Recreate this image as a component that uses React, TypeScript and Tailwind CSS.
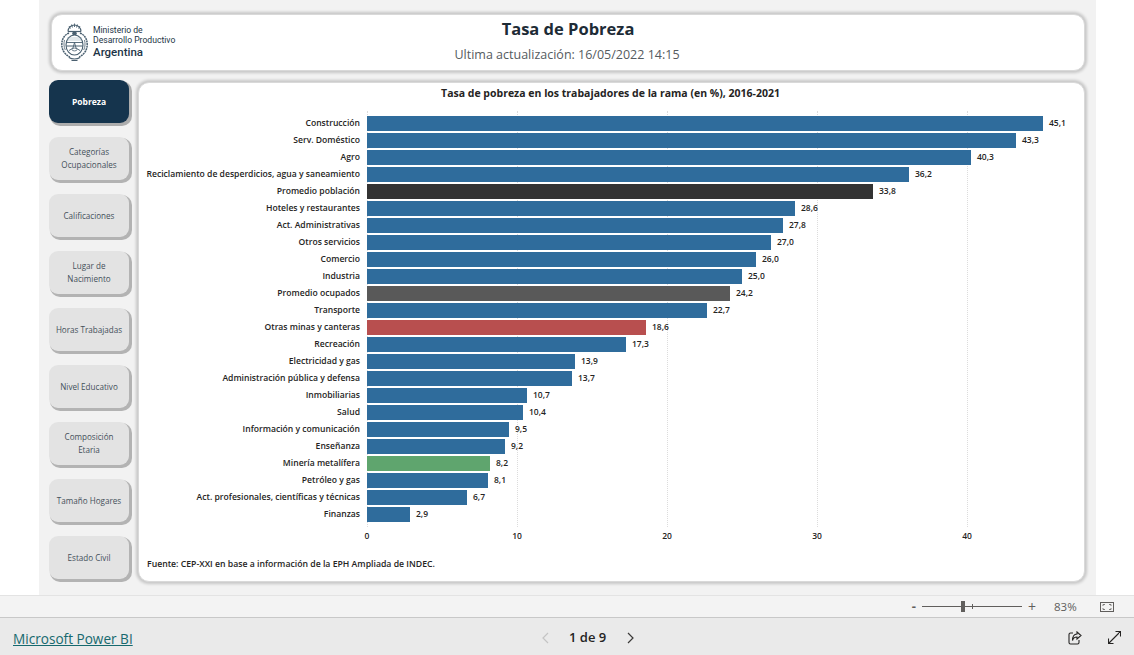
import React from 'react'

const rows = [
  { label: 'Construcción', value: 45.1, color: 'bg-[#2f6c9c]' },
  { label: 'Serv. Doméstico', value: 43.3, color: 'bg-[#2f6c9c]' },
  { label: 'Agro', value: 40.3, color: 'bg-[#2f6c9c]' },
  { label: 'Reciclamiento de desperdicios, agua y saneamiento', value: 36.2, color: 'bg-[#2f6c9c]' },
  { label: 'Promedio población', value: 33.8, color: 'bg-[#333333]' },
  { label: 'Hoteles y restaurantes', value: 28.6, color: 'bg-[#2f6c9c]' },
  { label: 'Act. Administrativas', value: 27.8, color: 'bg-[#2f6c9c]' },
  { label: 'Otros servicios', value: 27.0, color: 'bg-[#2f6c9c]' },
  { label: 'Comercio', value: 26.0, color: 'bg-[#2f6c9c]' },
  { label: 'Industria', value: 25.0, color: 'bg-[#2f6c9c]' },
  { label: 'Promedio ocupados', value: 24.2, color: 'bg-[#595959]' },
  { label: 'Transporte', value: 22.7, color: 'bg-[#2f6c9c]' },
  { label: 'Otras minas y canteras', value: 18.6, color: 'bg-[#b84f4f]' },
  { label: 'Recreación', value: 17.3, color: 'bg-[#2f6c9c]' },
  { label: 'Electricidad y gas', value: 13.9, color: 'bg-[#2f6c9c]' },
  { label: 'Administración pública y defensa', value: 13.7, color: 'bg-[#2f6c9c]' },
  { label: 'Inmobiliarias', value: 10.7, color: 'bg-[#2f6c9c]' },
  { label: 'Salud', value: 10.4, color: 'bg-[#2f6c9c]' },
  { label: 'Información y comunicación', value: 9.5, color: 'bg-[#2f6c9c]' },
  { label: 'Enseñanza', value: 9.2, color: 'bg-[#2f6c9c]' },
  { label: 'Minería metalífera', value: 8.2, color: 'bg-[#5fa56e]' },
  { label: 'Petróleo y gas', value: 8.1, color: 'bg-[#2f6c9c]' },
  { label: 'Act. profesionales, científicas y técnicas', value: 6.7, color: 'bg-[#2f6c9c]' },
  { label: 'Finanzas', value: 2.9, color: 'bg-[#2f6c9c]' },
]

const navItems = [
  ['Pobreza'],
  ['Categorías', 'Ocupacionales'],
  ['Calificaciones'],
  ['Lugar de', 'Nacimiento'],
  ['Horas Trabajadas'],
  ['Nivel Educativo'],
  ['Composición', 'Etaria'],
  ['Tamaño Hogares'],
  ['Estado Civil'],
]

const Shield = () => (
  <svg width="27" height="41" viewBox="0 0 27 41" fill="none" stroke="#4a6070" strokeWidth="1">
    {/* sol */}
    <path d="M7 10.500a6.500 6.500 0 0 1 13 0" strokeWidth="1.2" />
    <path d="M8 5l1.500 2.500M13.500 2.500V6M19 5l-1.500 2.500M10.500 3.500l1 3M16.500 3.500l-1 3" strokeWidth="0.9" />
    <path d="M7 10.500h13" strokeWidth="1.2" />
    <circle cx="13.500" cy="12.500" r="2.300" fill="#4a6070" stroke="none" />
    {/* laureles */}
    <path d="M8 12C3 14 .8 18.500.8 23.500c0 5.500 3 10 8 12.500M19 12c5 2 7.200 6.500 7.200 11.500 0 5.500-3 10-8 12.500" strokeWidth="1.500" strokeDasharray="2 0.600" />
    <path d="M3.500 19c-.8 3-.8 7 .8 10M23.500 19c.8 3 .8 7-.8 10" strokeWidth="0.8" />
    {/* escudo */}
    <ellipse cx="13.500" cy="24" rx="8.500" ry="10" strokeWidth="1.100" fill="#fff" />
    <path d="M5.300 21.500h16.400" strokeWidth="0.900" />
    <path d="M5.800 19h15.400M6 17h15" strokeWidth="0.500" stroke="#8aa0ae" />
    <path d="M5.200 25h16.600" strokeWidth="1" />
    <path d="M8 29.500l4-2.500 1.500-5.500M19 29.500l-4-2.500-1.500-5.500" strokeWidth="0.900" />
    <ellipse cx="13.500" cy="28.500" rx="2.500" ry="1.400" strokeWidth="0.800" />
    {/* cinta */}
    <path d="M8 36.500c3 2 8 2 11 0M10.500 39.500h6" strokeWidth="1.200" />
  </svg>
)

const Header = () => (
  <div className="h-[57px] ml-[12px] w-[1034px] bg-white rounded-[11px] border border-[#d9d9d9] shadow-[0_0_3px_2px_rgba(0,0,0,0.18)] flex relative">
    <div className="absolute left-[9px] top-[6px] flex items-center gap-[5px]">
      <Shield />
      <div className="flex flex-col text-[#1c3446] font-['Roboto',sans-serif]">
        <span className="text-[8.600px] leading-[10px]">Ministerio de</span>
        <span className="text-[8.600px] leading-[10px]">Desarrollo Productivo</span>
        <span className="text-[11.500px] leading-[14px] font-medium">Argentina</span>
      </div>
    </div>
    <div className="flex-1 flex flex-col items-center">
      <span className="text-[16.500px] leading-[24px] mt-[2px] font-bold text-[#1d2b36]">Tasa de Pobreza</span>
      <span className="text-[12.500px] leading-[18px] mt-[5px] -ml-[2px] text-[#555b60]">Ultima actualización: 16/05/2022 14:15</span>
    </div>
  </div>
)

const Sidebar = () => (
  <div className="w-[99px] pl-[10px] flex flex-col gap-[14px] shrink-0">
    {navItems.map((item, i) => (
      <div
        key={item[0]}
        className={
          i === 0
            ? 'w-[80px] h-[43px] rounded-[9px] bg-[#15344d] shadow-[2px_2px_0_1px_#adadad] flex flex-col items-center justify-center text-white font-bold text-[8.500px] leading-[13px]'
            : item.length > 1
              ? 'w-[80px] h-[43px] pb-[2px] rounded-[9px] bg-[#e3e3e3] shadow-[2px_2px_0_1px_#b3b3b3] flex flex-col items-center justify-center text-[#44505a] text-[8.100px] leading-[13px]'
              : 'w-[80px] h-[43px] rounded-[9px] bg-[#e3e3e3] shadow-[2px_2px_0_1px_#b3b3b3] flex flex-col items-center justify-center text-[#44505a] text-[8.100px] leading-[13px]'
        }
      >
        {item.map((line) => (
          <span key={line}>{line}</span>
        ))}
      </div>
    ))}
  </div>
)

const Chart = () => (
  <div className="w-[947px] h-[500px] mt-[2px] bg-white rounded-[11px] border border-[#d9d9d9] shadow-[0_0_3px_2px_rgba(0,0,0,0.18)] flex flex-col relative">
    <div className="h-[24px] -ml-[2px] text-center text-[10.500px] leading-[21px] font-bold text-[#252423]">
      Tasa de pobreza en los trabajadores de la rama (en %), 2016-2021
    </div>
    <div className="relative mt-[8px] flex flex-col">
      {/* lineas de la grilla */}
      {[0, 150, 300, 450, 600].map((left) => (
        <div
          key={left}
          className="absolute -top-[4px] h-[416px] border-l border-dotted border-[#dcdcdc]"
          style={{ left: 228 + left }}
        />
      ))}
      {rows.map((row) => (
        <div key={row.label} className="h-[17px] flex items-center relative">
          <div className="w-[221px] shrink-0 text-right text-[8.600px] font-semibold text-[#252423] whitespace-nowrap">
            {row.label}
          </div>
          <div className="ml-[7px] flex items-center">
            <div className={`h-[15px] ${row.color}`} style={{ width: Math.round(row.value * 14.98) }} />
            <span className="ml-[6px] text-[8.500px] font-semibold text-[#252423]">
              {row.value.toFixed(1).replace('.', ',')}
            </span>
          </div>
        </div>
      ))}
    </div>
    <div className="h-[16px] mt-[5px] ml-[228px] flex">
      {[0, 10, 20, 30, 40].map((tick) => (
        <span key={tick} className="w-[150px] shrink-0 text-[8.500px] font-semibold leading-[16px] text-[#252423]">
          <span className="inline-block -translate-x-1/2">{tick}</span>
        </span>
      ))}
    </div>
    <div className="mt-[14px] ml-[8px] text-[8.700px] font-semibold text-[#252423]">
      Fuente: CEP-XXI en base a información de la EPH Ampliada de INDEC.
    </div>
  </div>
)

const StatusBar = () => (
  <div className="h-[22px] bg-[#f3f3f3] border-t border-[#e3e3e3] flex items-center justify-end text-[#605e5c] shrink-0">
    <span className="text-[13px] leading-none font-bold mr-[6px]">-</span>
    <div className="relative w-[100px] h-[1px] bg-[#605e5c]">
      <div className="absolute left-[39px] top-[-5px] w-[4px] h-[11px] bg-[#605e5c]" />
      <div className="absolute left-[50px] top-[-2px] w-[1px] h-[5px] bg-[#605e5c]" />
    </div>
    <span className="text-[14px] leading-none ml-[6px]">+</span>
    <span className="text-[11.500px] ml-[18px] w-[25px]">83%</span>
    <svg className="ml-[21px] mr-[20px]" width="14" height="10" viewBox="0 0 14 10" fill="none" stroke="#605e5c">
      <rect x="0.5" y="0.5" width="13" height="9" />
      <path d="M3 4V2.500h2M11 4V2.500H9M3 6v1.500h2M11 6v1.500H9" strokeWidth="0.8" />
    </svg>
  </div>
)

const Footer = () => (
  <div className="h-[38px] pt-[5px] bg-[#eaeaea] border-t border-[#c8c8c8] flex items-center relative shrink-0">
    <a href="#" className="ml-[13px] text-[13.600px] underline text-[#16696e]">
      Microsoft Power BI
    </a>
    {/* paginador centrado */}
    <div className="absolute left-[541px] top-[3px] bottom-0 flex items-center">
      <svg width="10" height="12" viewBox="0 0 10 12" fill="none" stroke="#c4c4c4" strokeWidth="1.2">
        <path d="M7 1L2 6l5 5" />
      </svg>
      <span className="ml-[18px] text-[13px] font-semibold text-[#252423]">1 de 9</span>
      <svg className="ml-[19px]" width="10" height="12" viewBox="0 0 10 12" fill="none" stroke="#3b3a39" strokeWidth="1.2">
        <path d="M3 1l5 5-5 5" />
      </svg>
    </div>
    <div className="ml-auto flex items-center gap-[26px] mr-[13px] -mt-[3px]">
      <svg width="14" height="14" viewBox="0 0 14 14" fill="none" stroke="#252423" strokeWidth="1.1">
        <path d="M5 2H2.500A1.500 1.500 0 0 0 1 3.500v8A1.500 1.500 0 0 0 2.500 13h7a1.500 1.500 0 0 0 1.500-1.500V9" />
        <path d="M9 1l4 3.500L9 8V6C6.500 6 5 7.500 4.500 9.500 4.500 6 6 3.200 9 3z" />
      </svg>
      <svg width="13" height="13" viewBox="0 0 13 13" fill="none" stroke="#252423" strokeWidth="1.1">
        <path d="M.5 12.500l12-12M7.500.5h5v5M.5 7.500v5h5" />
      </svg>
    </div>
  </div>
)

export default function App() {
  return (
    <div className="w-[1134px] h-[655px] flex flex-col bg-white overflow-hidden font-['Open_Sans',sans-serif]">
      <div className="h-[595px] ml-[39px] w-[1057px] bg-[#f2f2f2] pt-[14px] shrink-0">
        <Header />
        <div className="flex mt-[9px]">
          <Sidebar />
          <Chart />
        </div>
      </div>
      <StatusBar />
      <Footer />
    </div>
  )
}
